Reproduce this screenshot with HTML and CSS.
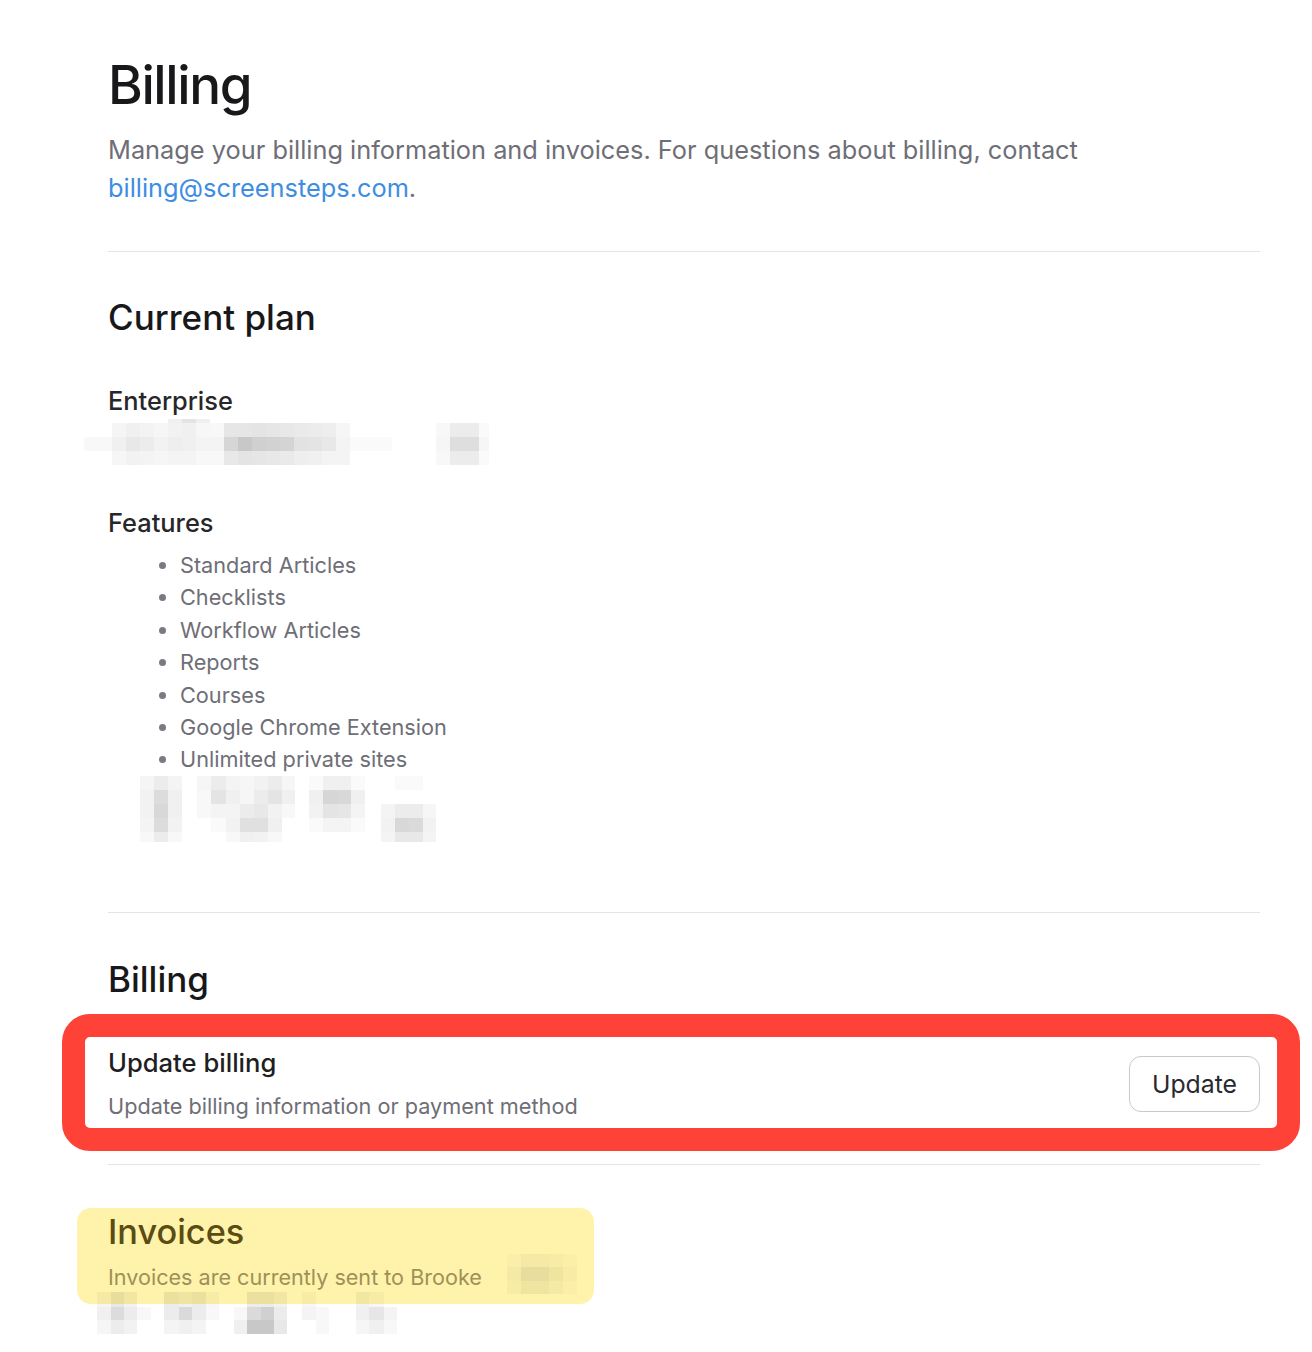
FILE: index.html
```html
<!DOCTYPE html>
<html lang="en">
<head>
<meta charset="utf-8">
<title>Billing</title>
<link rel="stylesheet" href="styles.css">
</head>
<body>
<main class="page">
  <h1 class="title">Billing</h1>
  <p class="lead">Manage your billing information and invoices. For questions about billing, contact <a class="link" href="#">billing@screensteps.com</a>.</p>
  <hr class="rule rule-top">

  <section class="plan">
    <h2 class="section-title">Current plan</h2>
    <h3 class="plan-name">Enterprise</h3>
    <svg class="mosaic mosaic-plan" width="410" height="50" viewBox="0 0 410 50" aria-hidden="true">
      <rect x="84" y="2" width="14" height="4" fill="#f0f0f0"/><rect x="98" y="2" width="14" height="4" fill="#e4e4e4"/><rect x="112" y="2" width="14" height="4" fill="#f0f0f0"/>
      <rect x="28" y="6" width="14" height="14" fill="#f5f5f5"/><rect x="42" y="6" width="14" height="14" fill="#f0f0f0"/><rect x="56" y="6" width="14" height="14" fill="#f3f3f3"/><rect x="70" y="6" width="14" height="14" fill="#f6f6f6"/><rect x="84" y="6" width="14" height="14" fill="#f2f2f2"/><rect x="98" y="6" width="14" height="14" fill="#f0f0f0"/><rect x="112" y="6" width="14" height="14" fill="#f7f7f7"/><rect x="126" y="6" width="14" height="14" fill="#f8f8f8"/><rect x="140" y="6" width="14" height="14" fill="#e6e6e6"/><rect x="154" y="6" width="14" height="14" fill="#e6e6e6"/><rect x="168" y="6" width="14" height="14" fill="#e4e4e4"/><rect x="182" y="6" width="14" height="14" fill="#e6e6e6"/><rect x="196" y="6" width="14" height="14" fill="#e8e8e8"/><rect x="210" y="6" width="14" height="14" fill="#eaeaea"/><rect x="224" y="6" width="14" height="14" fill="#ececec"/><rect x="238" y="6" width="14" height="14" fill="#eeeeee"/><rect x="252" y="6" width="14" height="14" fill="#f6f6f6"/>
      <rect x="0" y="20" width="28" height="14" fill="#f8f8f8"/><rect x="28" y="20" width="14" height="14" fill="#f0f0f0"/><rect x="42" y="20" width="14" height="14" fill="#e8e8e8"/><rect x="56" y="20" width="14" height="14" fill="#ececec"/><rect x="70" y="20" width="14" height="14" fill="#f2f2f2"/><rect x="84" y="20" width="14" height="14" fill="#eeeeee"/><rect x="98" y="20" width="14" height="14" fill="#f0f0f0"/><rect x="112" y="20" width="14" height="14" fill="#f4f4f4"/><rect x="126" y="20" width="14" height="14" fill="#f4f4f4"/><rect x="140" y="20" width="14" height="14" fill="#d6d6d6"/><rect x="154" y="20" width="14" height="14" fill="#c8c8c8"/><rect x="168" y="20" width="14" height="14" fill="#d0d0d0"/><rect x="182" y="20" width="14" height="14" fill="#d2d2d2"/><rect x="196" y="20" width="14" height="14" fill="#d4d4d4"/><rect x="210" y="20" width="14" height="14" fill="#e2e2e2"/><rect x="224" y="20" width="14" height="14" fill="#e4e4e4"/><rect x="238" y="20" width="14" height="14" fill="#e8e8e8"/><rect x="252" y="20" width="14" height="14" fill="#f4f4f4"/><rect x="266" y="20" width="42" height="14" fill="#fafafa"/>
      <rect x="28" y="34" width="14" height="14" fill="#f6f6f6"/><rect x="42" y="34" width="14" height="14" fill="#f2f2f2"/><rect x="56" y="34" width="14" height="14" fill="#f4f4f4"/><rect x="70" y="34" width="14" height="14" fill="#f6f6f6"/><rect x="84" y="34" width="14" height="14" fill="#f4f4f4"/><rect x="98" y="34" width="14" height="14" fill="#f4f4f4"/><rect x="112" y="34" width="28" height="14" fill="#f8f8f8"/><rect x="140" y="34" width="14" height="14" fill="#e8e8e8"/><rect x="154" y="34" width="14" height="14" fill="#e4e4e4"/><rect x="168" y="34" width="14" height="14" fill="#e6e6e6"/><rect x="182" y="34" width="14" height="14" fill="#e8e8e8"/><rect x="196" y="34" width="14" height="14" fill="#eaeaea"/><rect x="210" y="34" width="14" height="14" fill="#eeeeee"/><rect x="224" y="34" width="14" height="14" fill="#f0f0f0"/><rect x="238" y="34" width="28" height="14" fill="#f4f4f4"/>
      <rect x="352" y="6" width="14" height="14" fill="#f8f8f8"/><rect x="366" y="6" width="29" height="14" fill="#ececec"/><rect x="395" y="6" width="10" height="14" fill="#fafafa"/>
      <rect x="352" y="20" width="14" height="14" fill="#f6f6f6"/><rect x="366" y="20" width="29" height="14" fill="#dedede"/><rect x="395" y="20" width="10" height="14" fill="#f6f6f6"/>
      <rect x="352" y="34" width="14" height="14" fill="#f8f8f8"/><rect x="366" y="34" width="29" height="14" fill="#ececec"/><rect x="395" y="34" width="10" height="14" fill="#fafafa"/>
    </svg>

    <h3 class="plan-name features-title">Features</h3>
    <ul class="features">
      <li>Standard Articles</li>
      <li>Checklists</li>
      <li>Workflow Articles</li>
      <li>Reports</li>
      <li>Courses</li>
      <li>Google Chrome Extension</li>
      <li>Unlimited private sites</li>
    </ul>
    <svg class="mosaic mosaic-features" width="300" height="66" viewBox="0 0 300 66" aria-hidden="true">
      <rect x="0" y="0" width="14" height="14" fill="#f5f5f5"/><rect x="14" y="0" width="14" height="14" fill="#ececec"/><rect x="28" y="0" width="14" height="14" fill="#f4f4f4"/>
      <rect x="0" y="14" width="14" height="14" fill="#f2f2f2"/><rect x="14" y="14" width="14" height="14" fill="#dcdcdc"/><rect x="28" y="14" width="14" height="14" fill="#f0f0f0"/>
      <rect x="0" y="28" width="14" height="14" fill="#f2f2f2"/><rect x="14" y="28" width="14" height="14" fill="#d8d8d8"/><rect x="28" y="28" width="14" height="14" fill="#f0f0f0"/>
      <rect x="0" y="42" width="14" height="14" fill="#f4f4f4"/><rect x="14" y="42" width="14" height="14" fill="#dcdcdc"/><rect x="28" y="42" width="14" height="14" fill="#f2f2f2"/>
      <rect x="0" y="56" width="14" height="10" fill="#f8f8f8"/><rect x="14" y="56" width="14" height="10" fill="#ececec"/><rect x="28" y="56" width="14" height="10" fill="#f8f8f8"/>

      <rect x="57" y="0" width="14" height="14" fill="#f6f6f6"/><rect x="71" y="0" width="15" height="14" fill="#ececec"/><rect x="86" y="0" width="14" height="14" fill="#f4f4f4"/><rect x="100" y="0" width="14" height="14" fill="#f6f6f6"/><rect x="114" y="0" width="14" height="14" fill="#f2f2f2"/><rect x="128" y="0" width="14" height="14" fill="#ececec"/><rect x="142" y="0" width="13" height="14" fill="#f6f6f6"/>
      <rect x="57" y="14" width="14" height="14" fill="#f8f8f8"/><rect x="71" y="14" width="15" height="14" fill="#e4e4e4"/><rect x="86" y="14" width="14" height="14" fill="#f0f0f0"/><rect x="100" y="14" width="14" height="14" fill="#f6f6f6"/><rect x="114" y="14" width="14" height="14" fill="#ececec"/><rect x="128" y="14" width="14" height="14" fill="#e4e4e4"/><rect x="142" y="14" width="13" height="14" fill="#f0f0f0"/>
      <rect x="57" y="28" width="14" height="14" fill="#f8f8f8"/><rect x="71" y="28" width="15" height="14" fill="#f4f4f4"/><rect x="86" y="28" width="14" height="14" fill="#f4f4f4"/><rect x="100" y="28" width="14" height="14" fill="#ececec"/><rect x="114" y="28" width="14" height="14" fill="#e8e8e8"/><rect x="128" y="28" width="14" height="14" fill="#f2f2f2"/><rect x="142" y="28" width="13" height="14" fill="#f8f8f8"/>
      <rect x="71" y="42" width="15" height="14" fill="#fafafa"/><rect x="86" y="42" width="14" height="14" fill="#f2f2f2"/><rect x="100" y="42" width="14" height="14" fill="#e0e0e0"/><rect x="114" y="42" width="14" height="14" fill="#e0e0e0"/><rect x="128" y="42" width="14" height="14" fill="#f0f0f0"/>
      <rect x="86" y="56" width="14" height="10" fill="#f8f8f8"/><rect x="100" y="56" width="14" height="10" fill="#f0f0f0"/><rect x="114" y="56" width="14" height="10" fill="#f2f2f2"/><rect x="128" y="56" width="14" height="10" fill="#f8f8f8"/>

      <rect x="169" y="0" width="14" height="14" fill="#fafafa"/><rect x="183" y="0" width="14" height="14" fill="#f0f0f0"/><rect x="197" y="0" width="14" height="14" fill="#f0f0f0"/><rect x="211" y="0" width="14" height="14" fill="#fafafa"/>
      <rect x="169" y="14" width="14" height="14" fill="#f0f0f0"/><rect x="183" y="14" width="14" height="14" fill="#d6d6d6"/><rect x="197" y="14" width="14" height="14" fill="#d8d8d8"/><rect x="211" y="14" width="14" height="14" fill="#f0f0f0"/>
      <rect x="169" y="28" width="14" height="14" fill="#f2f2f2"/><rect x="183" y="28" width="14" height="14" fill="#e4e4e4"/><rect x="197" y="28" width="14" height="14" fill="#e6e6e6"/><rect x="211" y="28" width="14" height="14" fill="#f4f4f4"/>
      <rect x="169" y="42" width="14" height="14" fill="#fafafa"/><rect x="183" y="42" width="14" height="14" fill="#f4f4f4"/><rect x="197" y="42" width="14" height="14" fill="#f4f4f4"/><rect x="211" y="42" width="14" height="14" fill="#fafafa"/>

      <rect x="255" y="0" width="14" height="14" fill="#fafafa"/><rect x="269" y="0" width="14" height="14" fill="#fafafa"/>
      <rect x="241" y="28" width="14" height="14" fill="#f4f4f4"/><rect x="255" y="28" width="14" height="14" fill="#ececec"/><rect x="269" y="28" width="14" height="14" fill="#ececec"/><rect x="283" y="28" width="13" height="14" fill="#f6f6f6"/>
      <rect x="241" y="42" width="14" height="14" fill="#f2f2f2"/><rect x="255" y="42" width="14" height="14" fill="#d8d8d8"/><rect x="269" y="42" width="14" height="14" fill="#dadada"/><rect x="283" y="42" width="13" height="14" fill="#f2f2f2"/>
      <rect x="241" y="56" width="14" height="10" fill="#f4f4f4"/><rect x="255" y="56" width="14" height="10" fill="#e8e8e8"/><rect x="269" y="56" width="14" height="10" fill="#e8e8e8"/><rect x="283" y="56" width="13" height="10" fill="#f4f4f4"/>
    </svg>
  </section>

  <hr class="rule rule-mid">

  <section class="billing">
    <h2 class="section-title">Billing</h2>
    <div class="billing-row">
      <div class="annotation" aria-hidden="true"></div>
      <div class="billing-text">
        <h3 class="row-title">Update billing</h3>
        <p class="row-sub">Update billing information or payment method</p>
      </div>
      <button class="btn" type="button">Update</button>
    </div>
  </section>

  <hr class="rule rule-low">

  <section class="invoices">
    <div class="highlight" aria-hidden="true"></div>
    <h2 class="invoices-title">Invoices</h2>
    <p class="invoices-sub"><span>Invoices are currently sent to Brooke</span>
      <svg class="mosaic mosaic-inline" width="70" height="40" viewBox="0 0 70 40" aria-hidden="true">
        <rect x="0" y="0" width="14" height="13" fill="#000" fill-opacity=".02"/><rect x="14" y="0" width="14" height="13" fill="#000" fill-opacity=".04"/><rect x="28" y="0" width="14" height="13" fill="#000" fill-opacity=".04"/><rect x="42" y="0" width="14" height="13" fill="#000" fill-opacity=".03"/><rect x="56" y="0" width="14" height="13" fill="#000" fill-opacity=".02"/>
        <rect x="0" y="13" width="14" height="14" fill="#000" fill-opacity=".04"/><rect x="14" y="13" width="14" height="14" fill="#000" fill-opacity=".09"/><rect x="28" y="13" width="14" height="14" fill="#000" fill-opacity=".09"/><rect x="42" y="13" width="14" height="14" fill="#000" fill-opacity=".06"/><rect x="56" y="13" width="14" height="14" fill="#000" fill-opacity=".03"/>
        <rect x="0" y="27" width="14" height="13" fill="#000" fill-opacity=".03"/><rect x="14" y="27" width="14" height="13" fill="#000" fill-opacity=".06"/><rect x="28" y="27" width="14" height="13" fill="#000" fill-opacity=".06"/><rect x="42" y="27" width="14" height="13" fill="#000" fill-opacity=".04"/><rect x="56" y="27" width="14" height="13" fill="#000" fill-opacity=".02"/>
      </svg>
    </p>
    <svg class="mosaic mosaic-invoices" width="300" height="42" viewBox="0 0 300 42" aria-hidden="true">
      <rect x="0" y="0" width="14" height="15" fill="#000" fill-opacity=".04"/><rect x="14" y="0" width="13" height="15" fill="#000" fill-opacity=".09"/><rect x="27" y="0" width="13" height="15" fill="#000" fill-opacity=".05"/><rect x="67" y="0" width="15" height="15" fill="#000" fill-opacity=".075"/><rect x="82" y="0" width="13" height="15" fill="#000" fill-opacity=".06"/><rect x="95" y="0" width="14" height="15" fill="#000" fill-opacity=".075"/><rect x="109" y="0" width="13" height="15" fill="#000" fill-opacity=".03"/><rect x="150" y="0" width="14" height="15" fill="#000" fill-opacity=".075"/><rect x="164" y="0" width="13" height="15" fill="#000" fill-opacity=".075"/><rect x="177" y="0" width="13" height="15" fill="#000" fill-opacity=".05"/><rect x="205" y="0" width="14" height="15" fill="#000" fill-opacity=".03"/><rect x="259" y="0" width="13" height="15" fill="#000" fill-opacity=".05"/><rect x="272" y="0" width="15" height="15" fill="#000" fill-opacity=".03"/>
      <rect x="0" y="15" width="14" height="13" fill="#f0f0f0"/><rect x="14" y="15" width="13" height="13" fill="#dcdcdc"/><rect x="27" y="15" width="13" height="13" fill="#ececec"/><rect x="40" y="15" width="14" height="13" fill="#f8f8f8"/><rect x="67" y="15" width="15" height="13" fill="#ececec"/><rect x="82" y="15" width="13" height="13" fill="#dadada"/><rect x="95" y="15" width="14" height="13" fill="#ececec"/><rect x="109" y="15" width="13" height="13" fill="#f8f8f8"/><rect x="137" y="15" width="13" height="13" fill="#f8f8f8"/><rect x="150" y="15" width="14" height="13" fill="#dadada"/><rect x="164" y="15" width="13" height="13" fill="#d0d0d0"/><rect x="177" y="15" width="13" height="13" fill="#ececec"/><rect x="205" y="15" width="14" height="13" fill="#f4f4f4"/><rect x="219" y="15" width="13" height="13" fill="#f8f8f8"/><rect x="259" y="15" width="13" height="13" fill="#f0f0f0"/><rect x="272" y="15" width="15" height="13" fill="#e6e6e6"/><rect x="287" y="15" width="13" height="13" fill="#f4f4f4"/>
      <rect x="0" y="28" width="14" height="14" fill="#f6f6f6"/><rect x="14" y="28" width="13" height="14" fill="#ececec"/><rect x="27" y="28" width="13" height="14" fill="#f2f2f2"/><rect x="67" y="28" width="15" height="14" fill="#f4f4f4"/><rect x="82" y="28" width="13" height="14" fill="#f0f0f0"/><rect x="95" y="28" width="14" height="14" fill="#f4f4f4"/><rect x="137" y="28" width="13" height="14" fill="#f0f0f0"/><rect x="150" y="28" width="14" height="14" fill="#c8c8c8"/><rect x="164" y="28" width="13" height="14" fill="#c8c8c8"/><rect x="177" y="28" width="13" height="14" fill="#e8e8e8"/><rect x="219" y="28" width="13" height="14" fill="#f8f8f8"/><rect x="259" y="28" width="13" height="14" fill="#f6f6f6"/><rect x="272" y="28" width="15" height="14" fill="#f0f0f0"/><rect x="287" y="28" width="13" height="14" fill="#f8f8f8"/>
    </svg>
  </section>
</main>
</body>
</html>
```

FILE: styles.css
```css
* {
  box-sizing: border-box;
}

html,
body {
  margin: 0;
  padding: 0;
  background: #ffffff;
}

body {
  font-family: Inter, "Noto Sans", "Liberation Sans", sans-serif;
  color: #18181b;
}

.page {
  padding: 51px 52px 40px 108px;
}

.title {
  margin: 0;
  font-size: 53px;
  line-height: 68px;
  font-weight: 500;
  letter-spacing: -1.4px;
  color: #18181b;
}

.lead {
  margin: 12px 0 0;
  font-size: 25.35px;
  line-height: 38px;
  font-weight: 400;
  color: #6e6e76;
}

.link {
  color: #3d8de3;
  text-decoration: none;
}

.rule {
  margin: 0;
  border: 0;
  height: 1px;
  background: #e4e4e7;
}

.rule-top {
  margin-top: 44px;
}

.rule-mid {
  margin-top: 70px;
}

.rule-low {
  margin-top: 43px;
}

.section-title {
  margin: 45px 0 0;
  font-size: 35px;
  line-height: 40px;
  font-weight: 500;
  color: #18181b;
}

.billing .section-title {
  margin-top: 46px;
}

.plan-name {
  margin: 48px 0 0;
  font-size: 25.4px;
  line-height: 32px;
  font-weight: 500;
  color: #27272a;
}

.mosaic {
  display: block;
}

.mosaic-plan {
  margin-left: -24px;
}

.features-title {
  margin-top: 40px;
}

.features {
  margin: 10px 0 0;
  padding: 0 0 0 72px;
  font-size: 21.7px;
  line-height: 32.4px;
  color: #6e6e76;
}

.features li::marker {
  color: #7a7a82;
}

.mosaic-features {
  margin-left: 32px;
}

.billing-row {
  position: relative;
  margin-top: 48px;
  display: flex;
  align-items: center;
  justify-content: space-between;
}

.annotation {
  position: absolute;
  top: -33px;
  bottom: -30px;
  left: -46px;
  right: -40px;
  border: 23px solid #fe4237;
  border-radius: 28px;
  pointer-events: none;
}

.row-title {
  margin: 0;
  font-size: 25.6px;
  line-height: 32px;
  font-weight: 500;
  color: #1f1f23;
}

.row-sub {
  margin: 12.6px 0 0;
  font-size: 21.7px;
  line-height: 30px;
  color: #6e6e76;
}

.btn {
  height: 56px;
  width: 131px;
  padding: 0;
  border: 1px solid #c9c9cc;
  border-radius: 12px;
  background: #ffffff;
  font-family: inherit;
  font-size: 24.8px;
  color: #2a2a2e;
}

.invoices {
  position: relative;
  isolation: isolate;
  margin-top: 46px;
}

.highlight {
  position: absolute;
  z-index: -1;
  top: -3px;
  left: -31px;
  width: 517px;
  height: 96px;
  border-radius: 14px;
  background: #fff3ac;
}

.invoices-title {
  margin: 0;
  font-size: 34.3px;
  line-height: 42px;
  font-weight: 500;
  color: #5b4c12;
}

.invoices-sub {
  margin: 9px 0 0;
  display: flex;
  align-items: flex-start;
  font-size: 21.6px;
  line-height: 30px;
  color: #9e9058;
}

.mosaic-inline {
  margin: -8px 0 -2px 25px;
}

.mosaic-invoices {
  margin-left: -11px;
}
```
